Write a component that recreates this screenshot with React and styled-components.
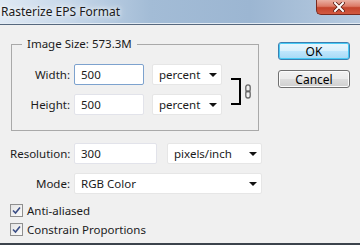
import React from 'react';
import styled, { createGlobalStyle } from 'styled-components';

const GlobalStyle = createGlobalStyle`
    html, body {
        margin: 0;
        padding: 0;
        background: #f0f0f0;
    }
    body {
        font-family: "Noto Sans", "Open Sans", sans-serif;
        font-size: 11.5px;
        color: #1b1b1b;
    }
`;

const Window = styled.div`
    width: 360px;
    height: 245px;
    box-sizing: border-box;
    background: #f0f0f0;
    border-bottom: 2px solid #3c434c;
    display: flex;
    flex-direction: column;
    overflow: hidden;
`;

const TitleBar = styled.div`
    height: 23px;
    display: flex;
    align-items: flex-start;
    justify-content: space-between;
    background: linear-gradient(90deg, #dfe9f4 0px, #c6d7e9 70px, #a3bcd6 150px, #9cb6d2 250px, #b7cbe0 360px);
    border-bottom: 1px solid #e4ecf4;
    box-shadow: 0 1px 0 #56687e;
`;

const Title = styled.span`
    padding: 3px 0 0 1px;
    font-size: 12px;
    color: #1a1a1a;
    text-shadow: 0 0 8px #ffffff, 0 0 4px #ffffff;
`;

const CloseButton = styled.div`
    width: 44px;
    height: 15px;
    box-sizing: border-box;
    border: 1px solid #7a2a1e;
    border-top: none;
    border-right: none;
    border-bottom-left-radius: 5px;
    background: linear-gradient(180deg, #eab0a2 0%, #dc7a66 45%, #c4442c 55%, #d25a40 100%);
    display: flex;
    align-items: center;
    justify-content: center;
`;

const Body = styled.div`
    flex: 1;
    display: flex;
    padding: 13px 0 0 10px;
`;

const LeftCol = styled.div`
    width: 252px;
    display: flex;
    flex-direction: column;
`;

const Group = styled.fieldset`
    margin: 0 0 0 1px;
    width: 248px;
    box-sizing: border-box;
    border: 1px solid #a9a9a9;
    padding: 13px 0 15px 0;
    display: grid;
    grid-template-columns: 62px 78px 79px 1fr;
    grid-template-rows: 21px 21px;
    row-gap: 9px;
    align-items: center;
`;

const Legend = styled.legend`
    margin-left: 10px;
    padding: 0 5px;
    line-height: 14px;
`;

const Label = styled.label`
    text-align: right;
    padding-right: 4px;
    white-space: nowrap;
`;

const TextBox = styled.div`
    width: ${props => props.width}px;
    height: 21px;
    box-sizing: border-box;
    background: #fff;
    border: 1px solid ${props => props.focused ? '#7da2ce' : '#e2e3ea'};
    border-radius: 2px;
    padding-left: 6px;
    display: flex;
    align-items: center;
`;

const Select = styled.div`
    width: ${props => props.width}px;
    height: 21px;
    box-sizing: border-box;
    background: #fff;
    border: 1px solid #e6e6e6;
    border-radius: 2px;
    padding: 0 4px 0 6px;
    display: flex;
    align-items: center;
    justify-content: space-between;
`;

const Arrow = styled.span`
    width: 0;
    height: 0;
    border-left: 4px solid transparent;
    border-right: 4px solid transparent;
    border-top: 4px solid #111;
`;

const LinkArea = styled.div`
    grid-column: 4;
    grid-row: 1 / span 2;
    display: flex;
    align-items: center;
    gap: 4px;
    padding-top: 3px;
`;

const Bracket = styled.div`
    width: 8px;
    height: 23px;
    border: 2px solid #000;
    border-left: none;
`;

const Form = styled.div`
    display: grid;
    grid-template-columns: 64px auto;
    row-gap: 9px;
    margin-top: 12px;
    align-items: center;
`;

const Units = styled.div`
    display: flex;
    gap: 10px;
`;

const Checks = styled.div`
    display: flex;
    flex-direction: column;
    gap: 6px;
    margin-top: 10px;
`;

const CheckRow = styled.label`
    display: flex;
    align-items: center;
    gap: 4px;
    height: 13px;
`;

const Box = styled.span`
    width: 13px;
    height: 13px;
    box-sizing: border-box;
    border: 1px solid #8f8f8f;
    background: linear-gradient(135deg, #e4e4e4, #fafafa);
    display: flex;
    align-items: center;
    justify-content: center;
`;

const RightCol = styled.div`
    display: flex;
    flex-direction: column;
    gap: 10px;
    padding: 5px 0 0 16px;
`;

const Button = styled.div`
    width: 72px;
    height: 18px;
    box-sizing: border-box;
    border: 1px solid ${props => props.primary ? '#3c7fb1' : '#707070'};
    border-radius: 3px;
    background: ${props => props.primary
        ? 'linear-gradient(180deg, #eaf6fd 0%, #d9f0fc 48%, #bee6fd 52%, #a7d9f5 100%)'
        : 'linear-gradient(180deg, #f2f2f2 0%, #ebebeb 48%, #dddddd 52%, #cfcfcf 100%)'};
    box-shadow: inset 0 0 0 1px ${props => props.primary ? '#48cbf6' : '#fcfcfc'};
    display: flex;
    align-items: center;
    justify-content: center;
    font-size: 12px;
    color: #000;
`;

function Check({ children }) {
    return (
        <CheckRow>
            <Box>
                <svg width="9" height="9" viewBox="0 0 9 9">
                    <path d="M1 4.5 L3.5 7 L8 1.5" fill="none" stroke="#3a4d85" strokeWidth="1.6" />
                </svg>
            </Box>
            {children}
        </CheckRow>
    );
}

function Chain() {
    return (
        <svg width="6" height="15" viewBox="0 0 6 15">
            <rect x="0.8" y="0.8" width="4.4" height="7" rx="2.2" fill="none" stroke="#666" strokeWidth="1.3" />
            <rect x="0.8" y="7" width="4.4" height="7" rx="2.2" fill="none" stroke="#666" strokeWidth="1.3" />
        </svg>
    );
}

export default function App() {
    return (
        <Window>
            <GlobalStyle />
            <TitleBar>
                <Title>Rasterize EPS Format</Title>
                <CloseButton>
                    <svg width="12" height="10" viewBox="0 0 12 10">
                        <path d="M2 1 L10 9 M10 1 L2 9" stroke="#5a1a10" strokeWidth="3.6" strokeLinecap="square" />
                        <path d="M2 1 L10 9 M10 1 L2 9" stroke="#fff" strokeWidth="2" strokeLinecap="square" />
                    </svg>
                </CloseButton>
            </TitleBar>
            <Body>
                <LeftCol>
                    <Group>
                        <Legend>Image Size: 573.3M</Legend>
                        <Label>Width:</Label>
                        <TextBox width={70} focused>500</TextBox>
                        <Select width={70}>percent<Arrow /></Select>
                        <LinkArea>
                            <Bracket />
                            <Chain />
                        </LinkArea>
                        <Label>Height:</Label>
                        <TextBox width={70}>500</TextBox>
                        <Select width={70}>percent<Arrow /></Select>
                    </Group>
                    <Form>
                        <Label>Resolution:</Label>
                        <Units>
                            <TextBox width={83}>300</TextBox>
                            <Select width={95}>pixels/inch<Arrow /></Select>
                        </Units>
                        <Label>Mode:</Label>
                        <Select width={188}>RGB Color<Arrow /></Select>
                    </Form>
                    <Checks>
                        <Check>Anti-aliased</Check>
                        <Check>Constrain Proportions</Check>
                    </Checks>
                </LeftCol>
                <RightCol>
                    <Button primary>OK</Button>
                    <Button>Cancel</Button>
                </RightCol>
            </Body>
        </Window>
    );
}
